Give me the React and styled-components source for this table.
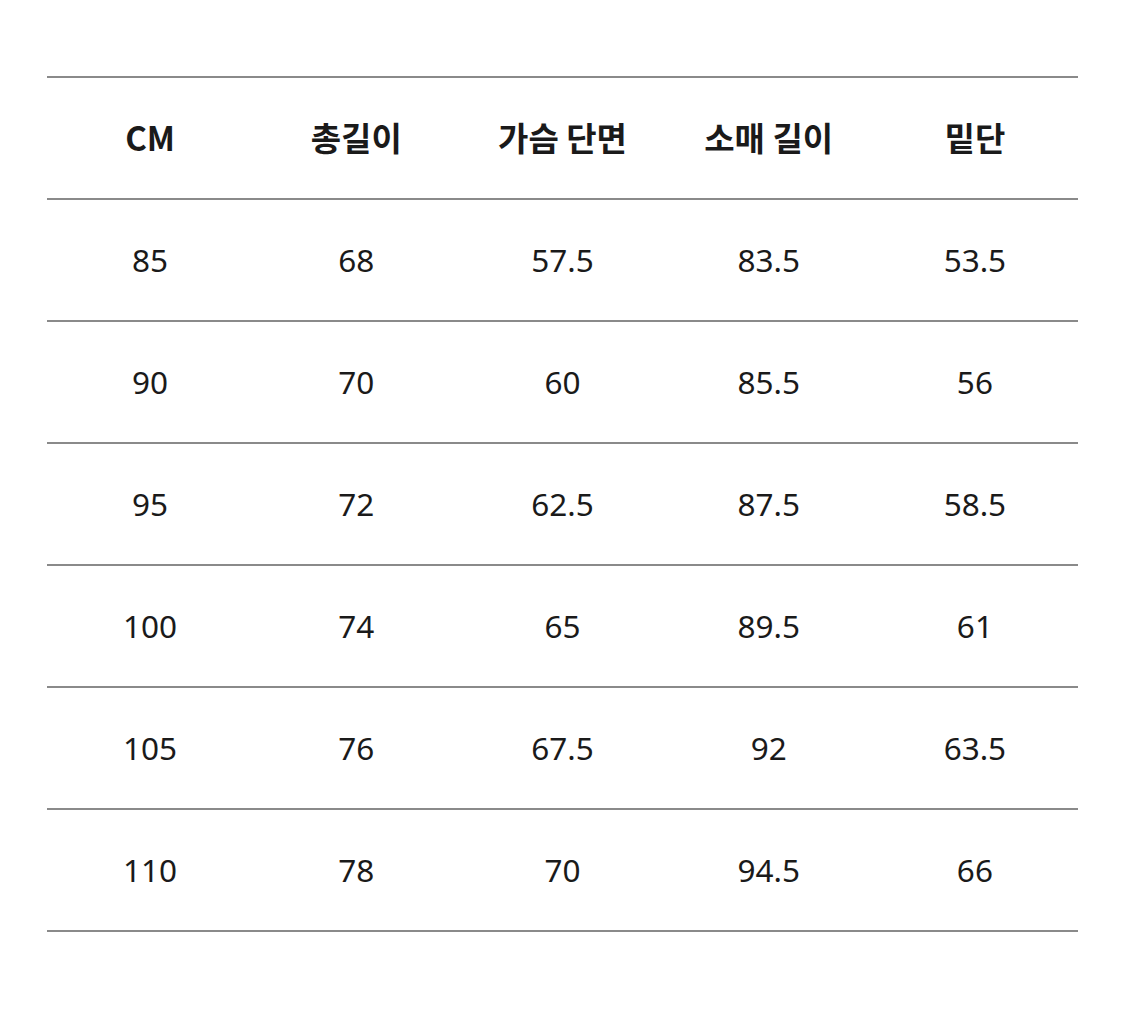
import React from "react";
import styled, { createGlobalStyle } from "styled-components";

const Global = createGlobalStyle`
  html, body { margin: 0; padding: 0; background: #ffffff; }
  body { font-family: "Noto Sans", "Noto Sans CJK KR", sans-serif; }
`;

const Page = styled.div`
  width: 1125px;
  height: 1011px;
  padding: 76px 0 0 47px;
  box-sizing: border-box;
  background: #fff;
`;

const Table = styled.div`
  width: 1031px;
  border-top: 2px solid #8a8a8a;
`;

const Row = styled.div`
  display: grid;
  grid-template-columns: repeat(5, 1fr);
  height: 122px;
  box-sizing: border-box;
  border-bottom: 2px solid #8a8a8a;
  align-items: center;
`;

const Cell = styled.div`
  text-align: center;
  color: #1a1a1a;
  font-family: ${(p) => (p.$head ? '"Noto Sans CJK KR", "Noto Sans", sans-serif' : '"Noto Sans", "Noto Sans CJK KR", sans-serif')};
  font-weight: ${(p) => (p.$head ? 700 : 400)};
  font-size: ${(p) => (p.$head ? "33px" : "31.5px")};
  line-height: 1;
  margin-top: ${(p) => (p.$head ? "-1px" : "0")};
`;

const header = ["CM", "총길이", "가슴 단면", "소매 길이", "밑단"];
const rows = [
  ["85", "68", "57.5", "83.5", "53.5"],
  ["90", "70", "60", "85.5", "56"],
  ["95", "72", "62.5", "87.5", "58.5"],
  ["100", "74", "65", "89.5", "61"],
  ["105", "76", "67.5", "92", "63.5"],
  ["110", "78", "70", "94.5", "66"],
];

export default function App() {
  return (
    <Page>
      <Global />
      <Table>
        <Row>
          {header.map((h) => (
            <Cell key={h} $head>{h}</Cell>
          ))}
        </Row>
        {rows.map((r, i) => (
          <Row key={i}>
            {r.map((v, j) => (
              <Cell key={j}>{v}</Cell>
            ))}
          </Row>
        ))}
      </Table>
    </Page>
  );
}
